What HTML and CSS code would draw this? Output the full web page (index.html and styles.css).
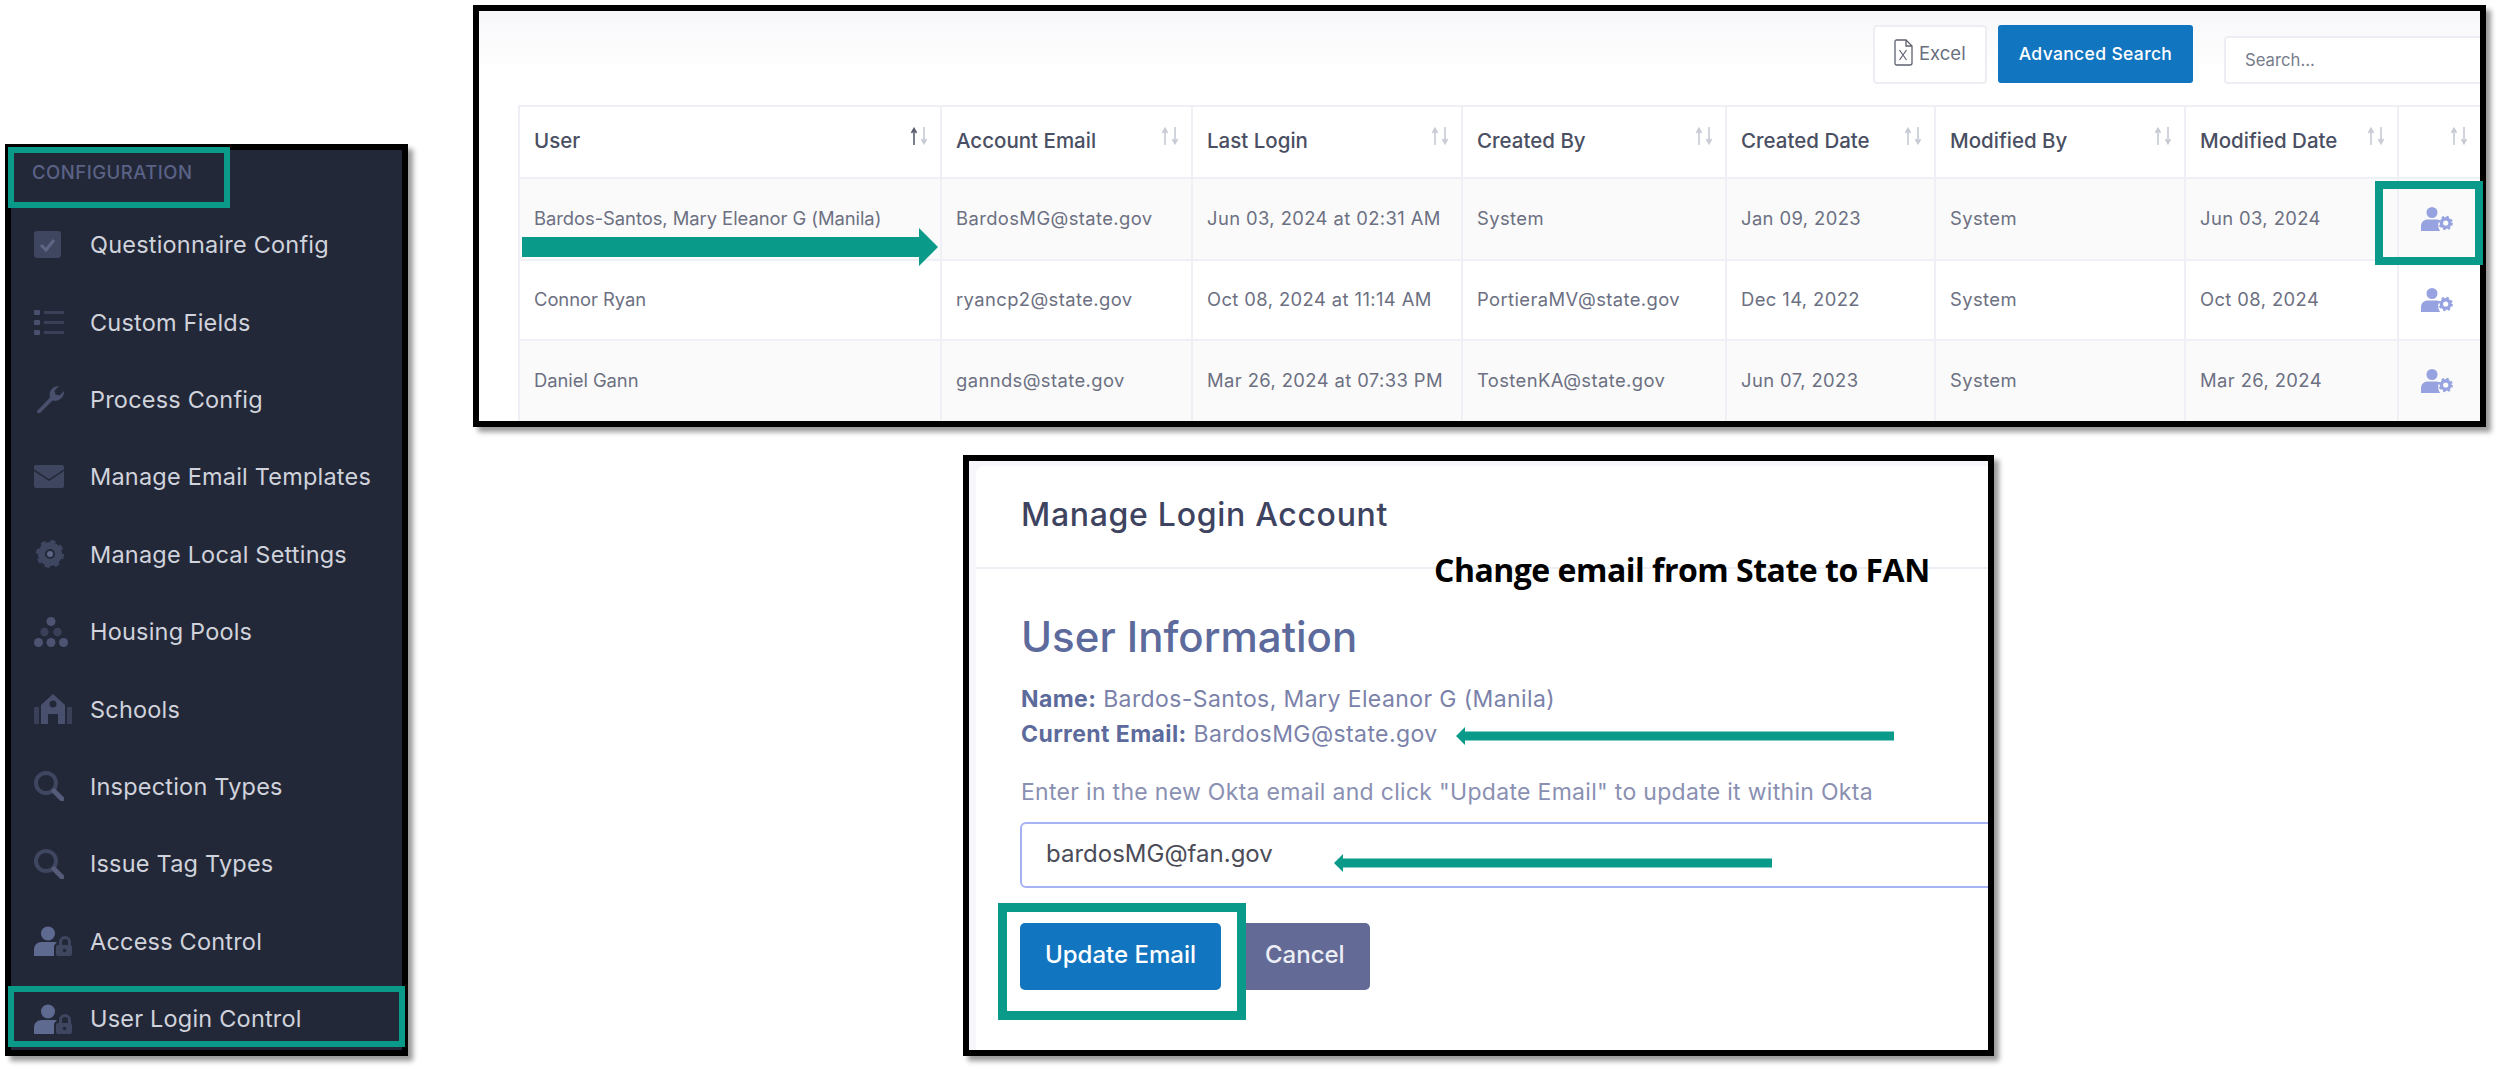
FILE: index.html
```html
<!DOCTYPE html>
<html lang="en">
<head>
<meta charset="utf-8">
<title>User Login Control</title>
<link rel="stylesheet" href="styles.css">
</head>
<body>
<svg class="defs" width="0" height="0" aria-hidden="true">
  <defs>
    <symbol id="sort" viewBox="0 0 18 18">
      <path class="up" d="M4 18V3M1.500 6L4 1.500 6.500 6" fill="none" stroke-width="1.600"/>
      <path class="down" d="M14 0v15M11.500 12L14 16.500 16.500 12" fill="none" stroke-width="1.600"/>
    </symbol>
    <symbol id="usercog" viewBox="0 0 32 24">
      <circle cx="11" cy="5.500" r="5.500" fill="#97a3e0"/>
      <path d="M0 24v-4.500C0 15 3 12.500 7 12.500h8c1.500 0 2.500.3 3.500 1-1 1.500-1.500 3.500-1.200 5.500.2 2 .8 3.700 2 5z" fill="#97a3e0"/>
      <circle cx="24.700" cy="16" r="4.300" fill="none" stroke="#97a3e0" stroke-width="3.400"/>
      <circle cx="24.700" cy="16" r="6.200" fill="none" stroke="#97a3e0" stroke-width="2" stroke-dasharray="2.400 2.470"/>
    </symbol>
    <symbol id="userlock" viewBox="0 0 38 30">
      <circle cx="14" cy="7.500" r="7" fill="#5f6a90"/>
      <path d="M0 30v-6c0-5 3-8 8-8h12c1.500 0 2.500.3 3 .7-2 1-3 2-3 4V30z" fill="#5f6a90"/>
      <path d="M24 30a2 2 0 0 1-2-2v-7a2 2 0 0 1 2-2h1v-3a6 6 0 0 1 12 0v3h-3v-3a3 3 0 0 0-6 0v3h8a2 2 0 0 1 2 2v7a2 2 0 0 1-2 2z" fill="#3f4660"/>
      <circle cx="30.500" cy="24.500" r="1.800" fill="#232838"/>
    </symbol>
    <symbol id="magnify" viewBox="0 0 30 30">
      <circle cx="12" cy="12" r="10" fill="none" stroke="#3f4660" stroke-width="4"/>
      <path d="M20 20l8 8" stroke="#545c7a" stroke-width="5" stroke-linecap="round"/>
    </symbol>
  </defs>
</svg>

<main class="canvas">

  <nav class="panel side">
    <div class="side-title">CONFIGURATION</div>
    <ul class="side-list">
      <li class="side-item"><span class="side-icon"><svg width="27" height="27" viewBox="0 0 27 27"><rect width="27" height="27" rx="3" fill="#3f4660"/><path d="M7 14l5 5 8-10" fill="none" stroke="#5e6686" stroke-width="3"/></svg></span>Questionnaire Config</li>
      <li class="side-item"><span class="side-icon"><svg width="30" height="25" viewBox="0 0 30 25"><g fill="#49506d"><rect width="6" height="5" rx="1"/><rect y="10" width="6" height="5" rx="1"/><rect y="20" width="6" height="5" rx="1"/></g><g fill="#3a4058"><rect x="10" y="1" width="20" height="3"/><rect x="10" y="11" width="20" height="3"/><rect x="10" y="21" width="20" height="3"/></g></svg></span>Custom Fields</li>
      <li class="side-item"><span class="side-icon"><svg width="30" height="30" viewBox="0 0 30 30"><path d="M3 27L16 13.500C14.500 8 18 2 25 2l-4.500 4.500 1 4 4 1L30 7c.5 7-6 11-11.500 9.500L6 29a2 2 0 0 1-3-2z" fill="#49506d"/></svg></span>Process Config</li>
      <li class="side-item"><span class="side-icon"><svg width="30" height="23" viewBox="0 0 30 23"><rect width="30" height="23" rx="2" fill="#3f4660"/><path d="M0 5l15 10L30 5" fill="none" stroke="#232838" stroke-width="1.500"/></svg></span>Manage Email Templates</li>
      <li class="side-item"><span class="side-icon gear-shift"><svg width="28" height="28" viewBox="0 0 28 28"><circle cx="14" cy="14" r="8.500" fill="none" stroke="#3f4660" stroke-width="7"/><circle cx="14" cy="14" r="12.500" fill="none" stroke="#3f4660" stroke-width="3" stroke-dasharray="5 4.820"/><circle cx="14" cy="14" r="3" fill="#5e6686"/></svg></span>Manage Local Settings</li>
      <li class="side-item"><span class="side-icon"><svg width="34" height="30" viewBox="0 0 34 30"><g fill="#4d5472"><circle cx="17" cy="4.500" r="4.500"/><circle cx="4.500" cy="25.500" r="4.500"/><circle cx="17" cy="25.500" r="4.500"/><circle cx="29.500" cy="25.500" r="4.500"/></g><g fill="#3a4058"><circle cx="10.500" cy="15" r="4.200"/><circle cx="23.500" cy="15" r="4.200"/></g></svg></span>Housing Pools</li>
      <li class="side-item"><span class="side-icon"><svg width="38" height="30" viewBox="0 0 38 30"><path d="M0 13h5v17H0zM33 13h5v17h-5z" fill="#3a4058"/><path d="M7 30V11L19 0l12 11v19h-7V20H14v10z" fill="#49506d"/><circle cx="19" cy="10" r="3.500" fill="#232838"/></svg></span>Schools</li>
      <li class="side-item"><span class="side-icon"><svg width="30" height="30"><use href="#magnify"/></svg></span>Inspection Types</li>
      <li class="side-item"><span class="side-icon"><svg width="30" height="30"><use href="#magnify"/></svg></span>Issue Tag Types</li>
      <li class="side-item"><span class="side-icon"><svg width="38" height="30"><use href="#userlock"/></svg></span>Access Control</li>
      <li class="side-item"><span class="side-icon"><svg width="38" height="30"><use href="#userlock"/></svg></span>User Login Control</li>
    </ul>
  </nav>

  <section class="panel grid-panel">
    <div class="toolbar">
      <button class="btn-excel"><svg width="19" height="27" viewBox="0 0 19 27"><path d="M2 1h10l6 6v17a2 2 0 0 1-2 2H2a1.500 1.500 0 0 1-1-1.500v-22A1.500 1.500 0 0 1 2 1zM12 1v6h6" fill="none" stroke="#5d6270" stroke-width="1.300"/><path d="M5.500 11l7 10M12.500 11l-7 10" stroke="#5d6270" stroke-width="1.200"/></svg>Excel</button>
      <button class="btn-advanced">Advanced Search</button>
      <input class="search" type="text" placeholder="Search...">
    </div>
    <table class="users">
      <colgroup>
        <col class="c1"><col class="c2"><col class="c3"><col class="c4"><col class="c5"><col class="c6"><col class="c7"><col class="c8">
      </colgroup>
      <thead>
        <tr>
          <th><div class="th-in">User<svg class="sort active" width="18" height="18"><use href="#sort"/></svg></div></th>
          <th><div class="th-in">Account Email<svg class="sort" width="18" height="18"><use href="#sort"/></svg></div></th>
          <th><div class="th-in">Last Login<svg class="sort" width="18" height="18"><use href="#sort"/></svg></div></th>
          <th><div class="th-in">Created By<svg class="sort" width="18" height="18"><use href="#sort"/></svg></div></th>
          <th><div class="th-in">Created Date<svg class="sort" width="18" height="18"><use href="#sort"/></svg></div></th>
          <th><div class="th-in">Modified By<svg class="sort" width="18" height="18"><use href="#sort"/></svg></div></th>
          <th><div class="th-in">Modified Date<svg class="sort" width="18" height="18"><use href="#sort"/></svg></div></th>
          <th class="last"><div class="th-in"><span></span><svg class="sort" width="18" height="18"><use href="#sort"/></svg></div></th>
        </tr>
      </thead>
      <tbody>
        <tr class="r1">
          <td>Bardos-Santos, Mary Eleanor G (Manila)</td><td>BardosMG@state.gov</td><td>Jun 03, 2024 at 02:31 AM</td><td>System</td><td>Jan 09, 2023</td><td>System</td><td>Jun 03, 2024</td>
          <td class="last"><svg class="cog" width="32" height="24"><use href="#usercog"/></svg></td>
        </tr>
        <tr class="r2">
          <td>Connor Ryan</td><td>ryancp2@state.gov</td><td>Oct 08, 2024 at 11:14 AM</td><td>PortieraMV@state.gov</td><td>Dec 14, 2022</td><td>System</td><td>Oct 08, 2024</td>
          <td class="last"><svg class="cog" width="32" height="24"><use href="#usercog"/></svg></td>
        </tr>
        <tr class="r3">
          <td>Daniel Gann</td><td>gannds@state.gov</td><td>Mar 26, 2024 at 07:33 PM</td><td>TostenKA@state.gov</td><td>Jun 07, 2023</td><td>System</td><td>Mar 26, 2024</td>
          <td class="last"><svg class="cog" width="32" height="24"><use href="#usercog"/></svg></td>
        </tr>
      </tbody>
    </table>
  </section>

  <section class="panel modal">
    <div class="card">
      <header class="card-head">Manage Login Account</header>
      <div class="card-body">
        <h2 class="info-title">User Information</h2>
        <p class="info-line"><b>Name:</b> Bardos-Santos, Mary Eleanor G (Manila)</p>
        <p class="info-line"><b>Current Email:</b> BardosMG@state.gov</p>
        <p class="hint">Enter in the new Okta email and click "Update Email" to update it within Okta</p>
        <input class="email" type="text" value="bardosMG@fan.gov">
        <div class="actions">
          <button class="btn-update">Update Email</button>
          <button class="btn-cancel">Cancel</button>
        </div>
      </div>
    </div>
  </section>

  <div class="mark mark-config"></div>
  <div class="mark mark-login"></div>
  <div class="mark mark-cog"></div>
  <div class="mark mark-update"></div>

  <svg class="arrow arrow-row" width="416" height="38" viewBox="0 0 416 38"><path d="M0 9h397V0l19 19-19 19v-9H0z" fill="#0a9a8a"/></svg>
  <svg class="arrow arrow-current" width="438" height="18" viewBox="0 0 438 18"><path d="M438 4.500H9V0L0 9l9 9v-4.500h429z" fill="#0a9a8a"/></svg>
  <svg class="arrow arrow-input" width="438" height="18" viewBox="0 0 438 18"><path d="M438 4.500H9V0L0 9l9 9v-4.500h429z" fill="#0a9a8a"/></svg>

  <div class="note">Change email from State to FAN</div>
</main>
</body>
</html>
```
FILE: styles.css
```css
* { box-sizing: border-box; }
html, body { margin: 0; padding: 0; background: #fff; }
body { font-family: Inter, "Open Sans", sans-serif; overflow: hidden; }
.defs { position: absolute; }
.canvas { position: relative; width: 2498px; height: 1069px; overflow: hidden; background: #fff; }

.panel {
  position: absolute;
  border: 6px solid #000;
  box-shadow: 5px 5px 5px rgba(0, 0, 0, .4);
  overflow: hidden;
  background: #fff;
}

/* Sidebar */
.side { left: 5px; top: 144px; width: 403px; height: 912px; background: #232838; }
.side-title {
  height: 56px;
  padding: 10px 0 0 21px;
  font-size: 18.500px;
  line-height: 24px;
  font-weight: 500;
  letter-spacing: .5px;
  color: #5a6286;
}
.side-list { list-style: none; margin: 0; padding: 0; }
.side-item {
  display: flex;
  align-items: center;
  height: 77.400px;
  padding-left: 23px;
  font-size: 23.500px;
  letter-spacing: .2px;
  color: #d0d3dc;
}
.side-icon { display: flex; align-items: center; width: 56px; flex: none; }
.gear-shift { padding-left: 2px; }

/* Table panel */
.grid-panel {
  left: 473px; top: 5px; width: 2013px; height: 422px;
  background: linear-gradient(#f7f7fa, #fff 60px);
}
.toolbar {
  display: flex;
  align-items: flex-end;
  height: 73px;
  padding: 0 0 0 1394px;
  white-space: nowrap;
}
.btn-excel {
  flex: none;
  display: flex; align-items: center; gap: 6px;
  width: 114px; height: 59px; padding: 0 0 4px 19px;
  border: 2px solid #eceef3; border-radius: 4px;
  background: #fff;
  font: 400 18.500px Inter, sans-serif; color: #6a6f80;
}
.btn-advanced {
  flex: none;
  width: 195px; height: 58px; margin: 0 31px 1px 11px; padding: 0 0 2px;
  border: 0; border-radius: 3px;
  background: #1275c0; color: #fff;
  font: 500 17.500px Inter, sans-serif;
  letter-spacing: .35px;
}
.search {
  flex: none;
  width: 320px; height: 48px; padding: 0 19px;
  border: 2px solid #eceef3; border-radius: 4px;
  background: #fff;
  font: 400 16.700px Inter, sans-serif; color: #6a6f80;
}
.search::placeholder { color: #777c8c; opacity: 1; }

.users {
  table-layout: fixed;
  border-collapse: collapse;
  width: 1962px;
  margin: 21px 0 0 39px;
  font-size: 18.400px;
  color: #6c7082;
}
.c1 { width: 422px; } .c2 { width: 251px; } .c3 { width: 270px; } .c4 { width: 264px; }
.c5 { width: 209px; } .c6 { width: 250px; } .c7 { width: 213px; } .c8 { width: 83px; }
.users th, .users td {
  padding: 0 0 3px 14px;
  border: 2px solid #eff0f5;
  text-align: left;
  white-space: nowrap;
}
.users td { letter-spacing: .4px; }
.users td:first-child { letter-spacing: -.05px; }
.users th { height: 72px; padding-right: 12px; font-size: 20.500px; font-weight: 500; color: #4a4f63; background: #fff; }
.users .r1 td { height: 82px; background: #fafafa; }
.users .r2 td { height: 80px; background: #fff; }
.users .r3 td { height: 82px; background: #fafafa; }
.users .last { padding-left: 22px; }
.th-in { display: flex; justify-content: space-between; align-items: center; }
.sort { margin-top: -10px; flex: none; --sort-up: #c7cad4; }
.sort.active { --sort-up: #5a5f70; }
.up { stroke: var(--sort-up); }
.down { stroke: #c7cad4; }
.cog { display: block; margin-top: 2px; }

/* Modal */
.modal { left: 963px; top: 455px; width: 1031px; height: 601px; background: #f6f6fb; }
.card {
  height: 100%;
  margin: 5px 0 0 7px;
  background: #fff;
  border-top-left-radius: 8px;
}
.card-head {
  height: 103px;
  padding: 29px 0 0 45px;
  border-bottom: 2px solid #eeeef5;
  font-size: 32px;
  letter-spacing: .7px;
  line-height: 40px;
  font-weight: 500;
  color: #3e4360;
}
.card-body { padding: 0 0 0 44px; }
.info-title {
  margin: 44px 0 0 1px;
  font-size: 42px;
  line-height: 48px;
  font-weight: 500;
  color: #5d6a9c;
}
.info-line {
  margin: 0 0 0 1px;
  font-size: 23px;
  letter-spacing: .4px;
  line-height: 35px;
  color: #7b82aa;
}
.info-line:first-of-type { margin-top: 21px; }
.info-line b { font-weight: 700; color: #5d6a9c; }
.hint {
  margin: 24px 0 0 1px;
  font-size: 23px;
  letter-spacing: .3px;
  line-height: 32px;
  color: #8a90b2;
}
.email {
  display: block;
  width: 1100px; height: 66px;
  margin-top: 14px; padding: 0 0 4px 24px;
  border: 2px solid #a7b2f4; border-radius: 6px;
  background: #fff;
  font: 400 24px Inter, sans-serif; color: #4b4c58;
}
.actions { display: flex; gap: 19px; margin-top: 35px; }
.actions button {
  height: 67px; padding: 0 0 5px;
  border: 0; border-radius: 5px;
  color: #fff;
  font: 500 24px Inter, sans-serif;
}
.btn-update { width: 201px; background: #1275c0; }
.actions .btn-cancel { width: 130px; padding-left: 25px; text-align: left; background: #636a96; color: #eceef5; }

/* Annotations */
.mark { position: absolute; border: solid #0a9a8a; background: transparent; }
.mark-config { left: 8px; top: 147px; width: 222px; height: 61px; border-width: 6px; }
.mark-login { left: 8px; top: 986px; width: 397px; height: 61px; border-width: 6px; }
.mark-cog { left: 2375px; top: 181px; width: 108px; height: 84px; border-width: 8px; }
.mark-update { left: 998px; top: 903px; width: 248px; height: 117px; border-width: 9px; }

.arrow { position: absolute; display: block; }
.arrow-row { left: 522px; top: 228px; }
.arrow-current { left: 1456px; top: 727px; }
.arrow-input { left: 1334px; top: 854px; }

.note {
  position: absolute;
  left: 1434px; top: 550px;
  font-family: "Open Sans", sans-serif;
  font-size: 32px;
  letter-spacing: -.5px;
  line-height: 40px;
  font-weight: 700;
  color: #000;
  white-space: nowrap;
}
```
